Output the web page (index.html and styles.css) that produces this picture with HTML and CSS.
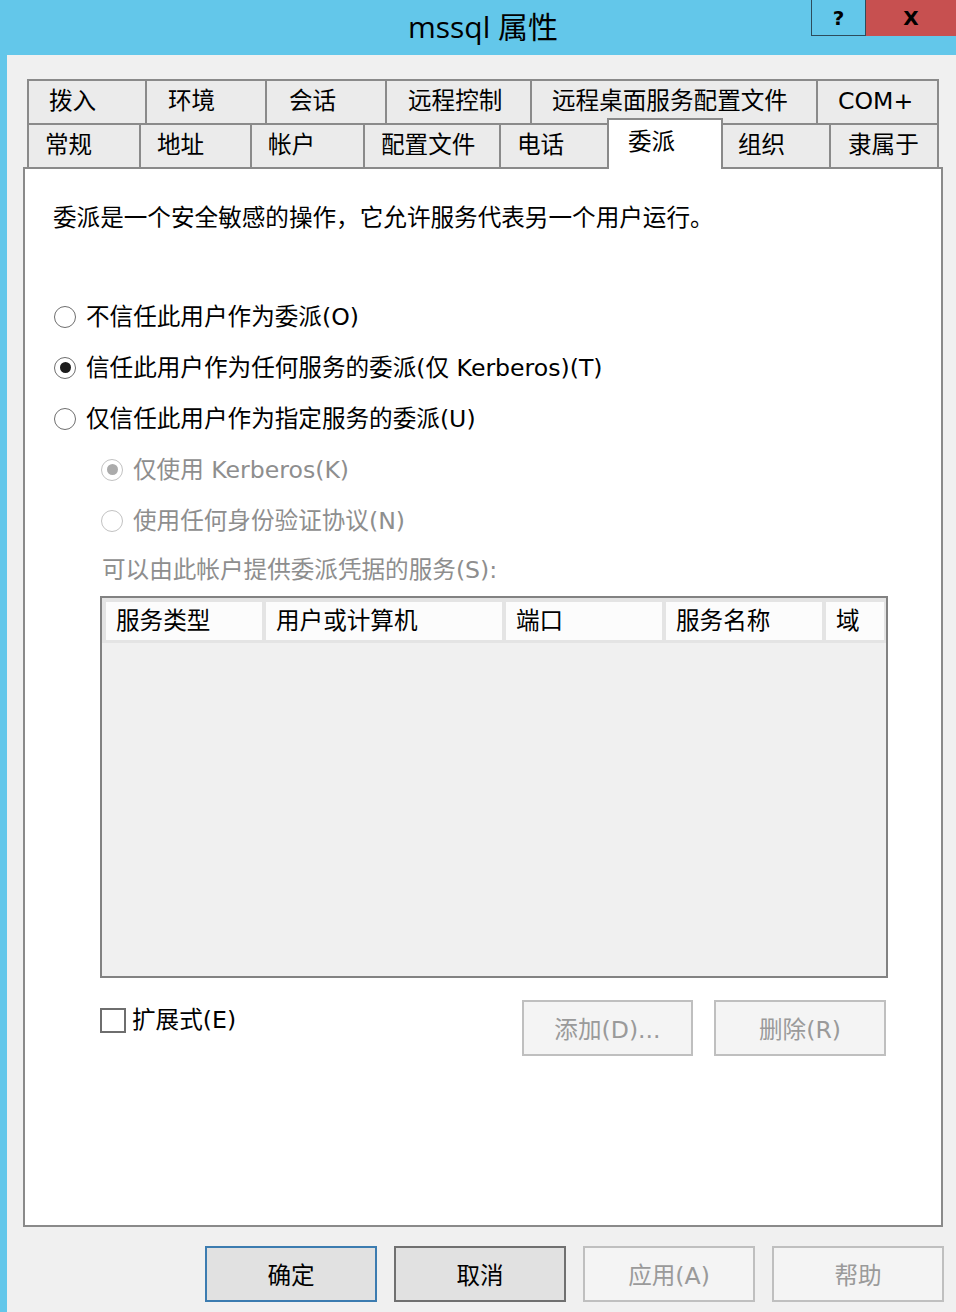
FILE: index.html
```html
<!DOCTYPE html>
<html lang="zh-CN">
<head>
<meta charset="utf-8">
<title>mssql 属性</title>
<link rel="stylesheet" href="styles.css">
</head>
<body>
<div class="titlebar">
  <div class="tb-left"></div>
  <div class="title">mssql 属性</div>
  <div class="caps">
    <div class="cap help">?</div>
    <div class="cap close">X</div>
  </div>
</div>
<div class="frame">
  <div class="tabs">
    <div class="tab-row row1">
      <div class="tab">拨入</div>
      <div class="tab">环境</div>
      <div class="tab">会话</div>
      <div class="tab">远程控制</div>
      <div class="tab">远程桌面服务配置文件</div>
      <div class="tab last">COM+</div>
    </div>
    <div class="tab-row row2">
      <div class="tab">常规</div>
      <div class="tab">地址</div>
      <div class="tab">帐户</div>
      <div class="tab">配置文件</div>
      <div class="tab">电话</div>
      <div class="tab sel">委派</div>
      <div class="tab nol">组织</div>
      <div class="tab last">隶属于</div>
    </div>
  </div>
  <div class="panel">
    <div class="desc">委派是一个安全敏感的操作，它允许服务代表另一个用户运行。</div>
    <div class="options">
      <div class="opt"><span class="radio"></span><span class="opt-text">不信任此用户作为委派(O)</span></div>
      <div class="opt"><span class="radio on"></span><span class="opt-text">信任此用户作为任何服务的委派(仅 Kerberos)(T)</span></div>
      <div class="opt"><span class="radio"></span><span class="opt-text">仅信任此用户作为指定服务的委派(U)</span></div>
      <div class="opt sub disabled"><span class="radio on"></span><span class="opt-text">仅使用 Kerberos(K)</span></div>
      <div class="opt sub disabled"><span class="radio"></span><span class="opt-text">使用任何身份验证协议(N)</span></div>
    </div>
    <div class="svc-label">可以由此帐户提供委派凭据的服务(S):</div>
    <div class="list">
      <div class="list-head">
        <div class="col c1">服务类型</div>
        <div class="col c2">用户或计算机</div>
        <div class="col c3">端口</div>
        <div class="col c4">服务名称</div>
        <div class="col c5">域</div>
      </div>
    </div>
    <div class="ext-row">
      <div class="check"><span class="box"></span><span class="check-text">扩展式(E)</span></div>
      <div class="btn-pair">
        <div class="btn dis add">添加(D)...</div>
        <div class="btn dis">删除(R)</div>
      </div>
    </div>
  </div>
  <div class="dlg-buttons">
    <div class="btn def">确定</div>
    <div class="btn norm">取消</div>
    <div class="btn dis">应用(A)</div>
    <div class="btn dis">帮助</div>
  </div>
</div>
</body>
</html>
```
FILE: styles.css
```css
html, body {
  margin: 0;
  padding: 0;
}
body {
  width: 956px;
  height: 1312px;
  overflow: hidden;
  background: #F0F0F0;
  font-family: "DejaVu Sans", "Noto Sans CJK SC", sans-serif;
  color: #000;
}

/* title bar */
.titlebar {
  height: 55px;
  background: #63C7EA;
  display: grid;
  grid-template-columns: 1fr auto 1fr;
}
.title {
  font-family: "Open Sans", "Noto Sans CJK SC", sans-serif;
  font-size: 30px;
  line-height: 53px;
  padding-left: 10px;
  white-space: nowrap;
}
.caps {
  justify-self: end;
  align-self: start;
  display: flex;
}
.cap {
  height: 36px;
  box-sizing: border-box;
  display: flex;
  align-items: center;
  justify-content: center;
  font-family: "DejaVu Sans", sans-serif;
  font-weight: bold;
  color: #000;
}
.help {
  width: 55px;
  font-size: 20px;
  border-left: 1px solid #2D4C5C;
  border-bottom: 1px solid #2D4C5C;
  border-right: 1px solid #2D4C5C;
}
.close {
  width: 90px;
  font-size: 20px;
  background: #C75050;
}

/* frame */
.frame {
  height: 1257px;
  box-sizing: border-box;
  border-left: 7px solid #63C7EA;
  padding: 24px 13px 0 16px;
}

/* tabs */
.tabs {
  margin: 0 4px;
}
.tab-row {
  display: flex;
  height: 44px;
  align-items: flex-start;
}
.tab {
  box-sizing: border-box;
  height: 44px;
  flex: none;
  border-top: 2px solid #8A8A8A;
  border-left: 2px solid #8A8A8A;
  background: #EBEBEB;
  font-size: 23.6px;
  line-height: 41px;
  padding-left: 20px;
  white-space: nowrap;
}
.tab.last {
  border-right: 2px solid #8A8A8A;
}
.row1 .tab:nth-child(1) { width: 118px; }
.row1 .tab:nth-child(2) { width: 120px; padding-left: 21px; }
.row1 .tab:nth-child(3) { width: 120px; padding-left: 22px; }
.row1 .tab:nth-child(4) { width: 145px; padding-left: 21px; }
.row1 .tab:nth-child(5) { width: 286px; }
.row1 .tab:nth-child(6) { width: 123px; }

.row2 .tab { padding-left: 16px; }
.row2 .tab:nth-child(1) { width: 112px; }
.row2 .tab:nth-child(2) { width: 111px; }
.row2 .tab:nth-child(3) { width: 113px; }
.row2 .tab:nth-child(4) { width: 136px; }
.row2 .tab:nth-child(5) { width: 108px; }
.row2 .tab:nth-child(6) { width: 116px; }
.row2 .tab:nth-child(7) { width: 106px; }
.row2 .tab:nth-child(8) { width: 110px; padding-left: 17px; }

.tab.sel {
  height: 51px;
  margin-top: -5px;
  background: #fff;
  border-right: 2px solid #8A8A8A;
  padding-left: 19px;
  padding-top: 2px;
  position: relative;
  z-index: 1;
}
.tab.nol {
  border-left: none;
  padding-left: 15px;
}

/* panel */
.panel {
  height: 1060px;
  box-sizing: border-box;
  border: 2px solid #8A8A8A;
  background: #fff;
  padding: 34px 0 0 28px;
  font-size: 23.6px;
}
.desc {
  line-height: 30px;
  white-space: nowrap;
}
.options {
  margin-top: 58px;
}
.opt {
  display: flex;
  align-items: center;
  height: 51px;
}
.opt.sub {
  padding-left: 47px;
}
.radio {
  flex: none;
  width: 22px;
  height: 22px;
  box-sizing: border-box;
  margin-left: 1px;
  border: 1.5px solid #6E6E6E;
  border-radius: 50%;
  background: #fff;
  display: flex;
  align-items: center;
  justify-content: center;
}
.radio.on::after {
  content: "";
  width: 11px;
  height: 11px;
  border-radius: 50%;
  background: #1C1C1C;
}
.opt-text {
  margin-left: 10px;
  line-height: 30px;
  white-space: nowrap;
}
.disabled .radio {
  border-color: #C2C2C2;
}
.disabled .radio.on::after {
  background: #ABABAB;
}
.disabled .opt-text {
  color: #8E8E8E;
}
.svc-label {
  margin: 9px 0 0 49px;
  line-height: 30px;
  color: #8E8E8E;
  white-space: nowrap;
}

/* list */
.list {
  margin: 11px 0 0 47px;
  width: 788px;
  height: 382px;
  box-sizing: border-box;
  border: 2px solid #828282;
  background: #F0F0F0;
}
.list-head {
  display: flex;
  gap: 4px;
  padding: 4px 2px 3px 4px;
  background: #E4E4E4;
}
.col {
  flex: none;
  height: 38px;
  box-sizing: border-box;
  background: #FCFCFC;
  line-height: 38px;
  padding-left: 10px;
  white-space: nowrap;
}
.c1 { width: 156px; }
.c2 { width: 236px; }
.c3 { width: 156px; }
.c4 { width: 156px; }
.c5 { width: 58px; }

/* extended row */
.ext-row {
  margin: 22px 0 0 47px;
  width: 788px;
  display: flex;
  justify-content: space-between;
  align-items: flex-start;
}
.check {
  display: flex;
  align-items: center;
  margin-top: 5px;
}
.box {
  width: 26px;
  height: 25px;
  box-sizing: border-box;
  border: 2px solid #6E6E6E;
  background: #fff;
}
.check-text {
  margin-left: 6px;
  line-height: 30px;
}
.btn-pair {
  display: flex;
  gap: 21px;
  margin-right: 2px;
}

/* buttons */
.btn {
  width: 172px;
  height: 56px;
  box-sizing: border-box;
  border: 2px solid #707070;
  display: flex;
  align-items: center;
  justify-content: center;
  font-size: 23.6px;
  white-space: nowrap;
}
.btn.add {
  width: 171px;
}
.btn.def {
  background: #E1E1E1;
  border-color: #3C7CB0;
}
.btn.norm {
  background: #E1E1E1;
  border-color: #707070;
}
.btn.dis {
  background: #F4F4F4;
  border-color: #BFBFBF;
  color: #9A9A9A;
}
.dlg-buttons {
  display: flex;
  justify-content: flex-end;
  gap: 17px;
  margin-top: 19px;
  margin-right: -1px;
}
```
